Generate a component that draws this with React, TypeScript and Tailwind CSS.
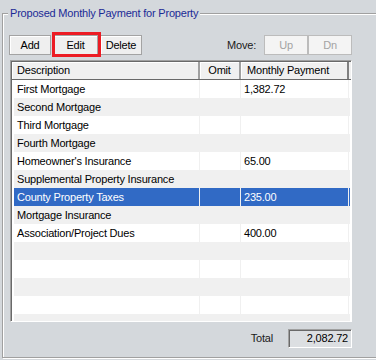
import React from 'react';

const rows = [
  { desc: 'First Mortgage', amount: '1,382.72' },
  { desc: 'Second Mortgage', amount: '' },
  { desc: 'Third Mortgage', amount: '' },
  { desc: 'Fourth Mortgage', amount: '' },
  { desc: "Homeowner's Insurance", amount: '65.00' },
  { desc: 'Supplemental Property Insurance', amount: '' },
  { desc: 'County Property Taxes', amount: '235.00', selected: true },
  { desc: 'Mortgage Insurance', amount: '' },
  { desc: 'Association/Project Dues', amount: '400.00' },
  { desc: '', amount: '' },
  { desc: '', amount: '' },
  { desc: '', amount: '' },
  { desc: '', amount: '' },
  { desc: '', amount: '' },
];

const Btn = ({ label, w, disabled }: { label: string; w: string; disabled?: boolean }) => (
  <button
    className={
      disabled
        ? `${w} h-[20px] border border-[#bcbcbc] bg-[#f4f4f4] text-[#a3a3a3] leading-none`
        : `${w} h-[20px] border border-[#a3a3a3] bg-[#efefef] text-black leading-none shadow-[inset_1px_1px_0_#fff]`
    }
  >
    {label}
  </button>
);

const App = () => {
  return (
    <div className="w-[376px] h-[360px] overflow-hidden bg-[#d4d8dc] pt-[13px] pl-[2px] text-[11px] tracking-[-0.2px] font-['Liberation_Sans',Arial,sans-serif] text-black">
      {/* Group box */}
      <div className="relative w-[380px] h-[345px] border border-[#a0a0a0] shadow-[inset_1px_1px_0_#fff,1px_1px_0_#fff] pl-[6px] pt-[21px]">
        <span className="absolute top-[-8px] left-[5px] px-[2px] bg-[#d4d8dc] text-[#1b2a96] leading-[14px]">
          Proposed Monthly Payment for Property
        </span>

        {/* Toolbar */}
        <div className="flex items-center w-[343px]">
          <Btn label="Add" w="w-[42px]" />
          <div className="relative ml-[2px]">
            <Btn label="Edit" w="w-[45px]" />
            <span className="absolute left-[-1px] right-[-3px] top-[-3px] bottom-[-2px] border-[3px] border-[#ec1c24]" />
          </div>
          <div className="ml-[2px]">
            <Btn label="Delete" w="w-[42px]" />
          </div>
          <span className="ml-auto mr-[8px] text-[#1a1a1a]">Move:</span>
          <Btn label="Up" w="w-[44px]" disabled />
          <Btn label="Dn" w="w-[44px]" disabled />
        </div>

        {/* List view */}
        <div className="ml-[1px] mt-[5px] w-[342px] h-[262px] border border-[#a0a0a0] border-r-white border-b-white shadow-[inset_1px_1px_0_#696969] bg-white pl-[1px] pt-[1px] overflow-hidden">
          <div className="flex h-[18px] bg-[#f0f0f0] border-b border-[#696969] w-[339px]">
            <div className="w-[188px] pl-[5px] flex items-center border-r-2 border-[#a0a0a0] shadow-[inset_1px_1px_0_#fff]">
              Description
            </div>
            <div className="w-[41px] flex items-center justify-center border-r-2 border-[#a0a0a0] shadow-[inset_1px_1px_0_#fff]">
              Omit
            </div>
            <div className="w-[108px] pl-[6px] flex items-center border-r-2 border-[#808080] shadow-[inset_1px_1px_0_#fff]">
              Monthly Payment
            </div>
          </div>
          <div className="pl-[2px]">
            {rows.map((r, i) => {
              const band = r.selected ? 'bg-[#316ac5] text-white' : i % 2 === 1 ? 'bg-[#f0f0f0]' : 'bg-white';
              return (
                <div key={i} className={`flex h-[18px] w-[336px] ${band}`}>
                  <div className="w-[186px] pl-[3px] flex items-center whitespace-nowrap border-r border-[#f0f0f0]">
                    {r.desc}
                  </div>
                  <div className="w-[41px] border-r border-[#f0f0f0]" />
                  <div className="w-[108px] pl-[3px] flex items-center border-r border-[#f0f0f0]">
                    {r.amount}
                  </div>
                </div>
              );
            })}
          </div>
        </div>

        {/* Total */}
        <div className="flex items-center justify-end w-[343px] mt-[7px]">
          <span className="mr-[15px] text-[#1a1a1a]">Total</span>
          <div className="w-[64px] h-[19px] border border-[#a0a0a0] border-r-white border-b-white shadow-[inset_1px_1px_0_#696969] bg-[#dcdfe2] flex items-center justify-end pr-[3px]">
            2,082.72
          </div>
        </div>
      </div>
    </div>
  );
};

export default App;
